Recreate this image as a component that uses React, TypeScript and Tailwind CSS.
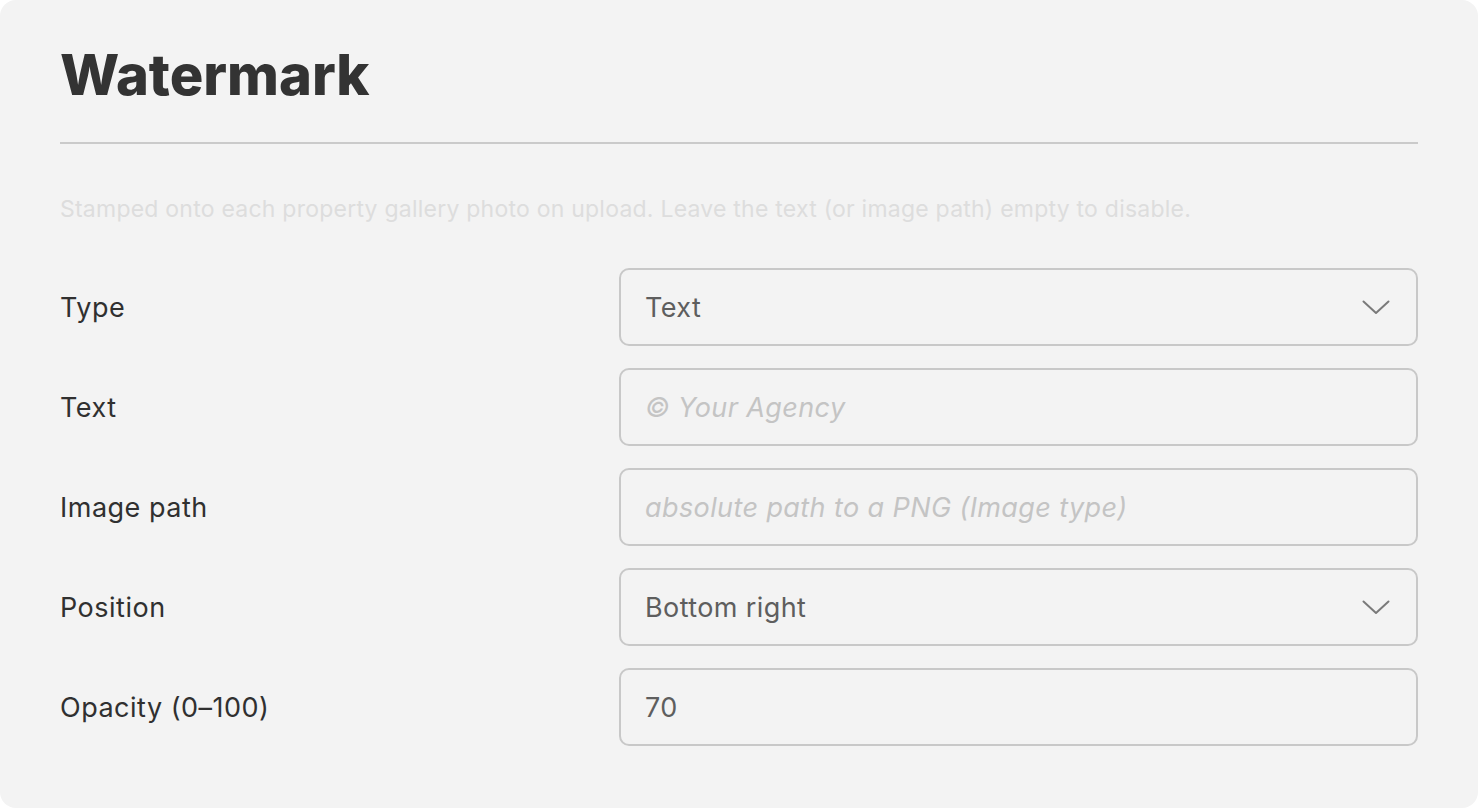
import React from "react";

function Chevron() {
  return (
    <svg width="28" height="15" viewBox="0 0 28 15" fill="none" className="shrink-0">
      <polyline points="1.5,1.5 14,13 26.5,1.5" stroke="#7a7a7a" strokeWidth="2" strokeLinecap="round" strokeLinejoin="round" />
    </svg>
  );
}

function Field({ children, select }: { children: React.ReactNode; select?: boolean }) {
  return (
    <div className="flex h-[78px] items-center justify-between rounded-[10px] border-2 border-[#c8c8c8] pl-[24px] pr-[26px]">
      <div className="flex items-center">{children}</div>
      {select ? <Chevron /> : null}
    </div>
  );
}

export default function App() {
  const font = { fontFamily: "Inter, 'Open Sans', sans-serif" };
  const value = "text-[27px] leading-none tracking-[0.4px] text-[#5e5e5e]";
  const ph = "text-[27px] leading-none tracking-[0.4px] italic text-[#c4c4c4]";
  const rows: { label: string; node: React.ReactNode }[] = [
    {
      label: "Type",
      node: (
        <Field select>
          <span className={value}>Text</span>
        </Field>
      ),
    },
    {
      label: "Text",
      node: (
        <Field>
          <span className={ph}>© Your Agency</span>
        </Field>
      ),
    },
    {
      label: "Image path",
      node: (
        <Field>
          <span className={ph}>absolute path to a PNG (Image type)</span>
        </Field>
      ),
    },
    {
      label: "Position",
      node: (
        <Field select>
          <span className={value}>Bottom right</span>
        </Field>
      ),
    },
    {
      label: "Opacity (0–100)",
      node: (
        <Field>
          <span className={value}>70</span>
        </Field>
      ),
    },
  ];
  return (
    <div className="min-h-screen w-full bg-white" style={font}>
      <div className="h-[808px] w-full rounded-[16px] bg-[#f3f3f3] px-[60px] pt-[47px]">
        <h1 className="text-[56px] font-extrabold leading-none text-[#333333]">Watermark</h1>
        <div className="mt-[39px] border-t-2 border-[#cacaca]" />
        <p className="mt-[54px] text-[23px] leading-none tracking-[0.23px] text-[#dddddd]">
          Stamped onto each property gallery photo on upload. Leave the text (or image path) empty to disable.
        </p>
        <div className="mt-[47px] grid grid-cols-[559px_1fr] gap-y-[22px]">
          {rows.map((r) => (
            <React.Fragment key={r.label}>
              <div className="flex items-center text-[27px] leading-none tracking-[0.5px] text-[#303030]">{r.label}</div>
              {r.node}
            </React.Fragment>
          ))}
        </div>
      </div>
    </div>
  );
}
